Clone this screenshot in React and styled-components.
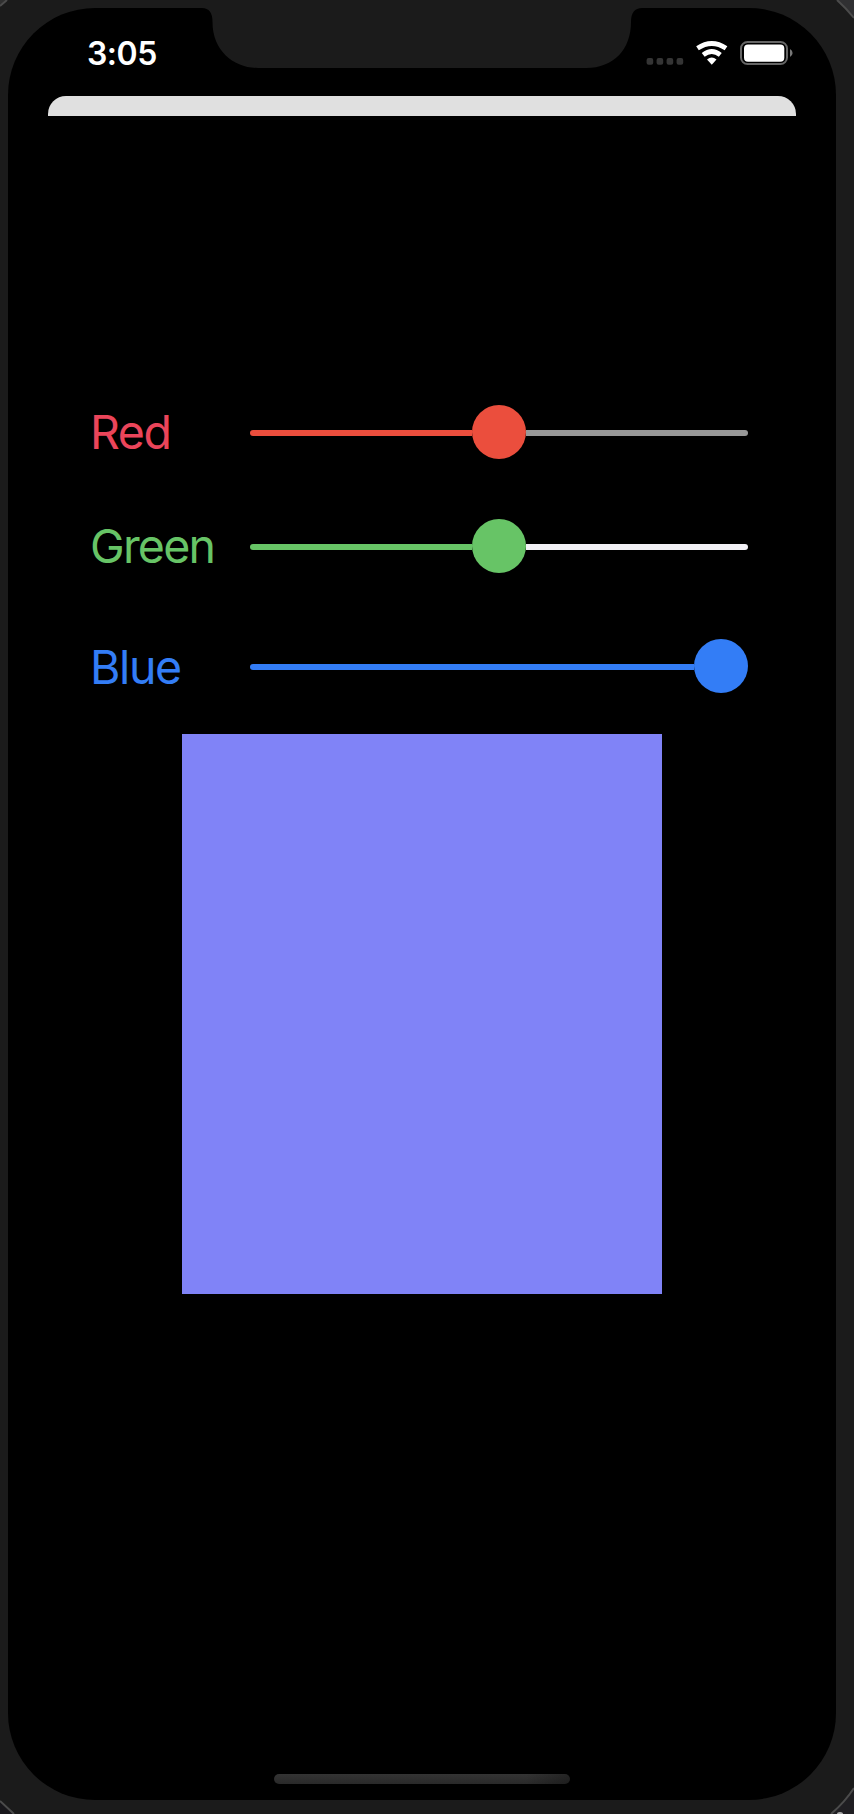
import React from 'react';
import styled, { createGlobalStyle } from 'styled-components';

const GlobalStyle = createGlobalStyle`
  * { box-sizing: border-box; }
  body { margin: 0; background: #1b1b1b; font-family: Inter, "Liberation Sans", sans-serif; }
`;

const Device = styled.div`
  position: relative;
  width: 854px;
  height: 1814px;
  padding: 8px 18px 14px 8px;
  background: #1b1b1b;
  overflow: hidden;
`;

const Corners = styled.svg`
  position: absolute;
  inset: 0;
  pointer-events: none;
`;

const Screen = styled.main`
  position: relative;
  display: flex;
  flex-direction: column;
  align-items: center;
  width: 828px;
  height: 1792px;
  border-radius: 87px;
  background: #000;
  overflow: hidden;
`;

const Notch = styled.svg`
  position: absolute;
  top: 0;
  left: 194px;
`;

const StatusBar = styled.header`
  display: flex;
  justify-content: space-between;
  align-items: flex-start;
  width: 100%;
  height: 88px;
  padding: 25px 42px 0 79px;
`;

const Time = styled.time`
  margin-top: 1px;
  color: #fff;
  font-size: 32px;
  font-weight: 600;
  line-height: 40px;
  letter-spacing: -0.5px;
`;

const StatusIcons = styled.svg`
  display: block;
  margin-top: 5px;
`;

const SheetEdge = styled.div`
  width: 748px;
  height: 20px;
  border-radius: 18px 18px 0 0;
  background: #e0e0e0;
`;

const Controls = styled.section`
  display: flex;
  flex-direction: column;
  width: 664px;
  padding-top: 288px;
`;

const ControlRow = styled.div`
  display: flex;
  height: ${(p) => p.$height}px;
`;

const Label = styled.label`
  width: 160px;
  padding-top: ${(p) => p.$drop || 0}px;
  color: ${(p) => p.$color};
  font-size: 46.5px;
  font-weight: 400;
  line-height: 56px;
  letter-spacing: ${(p) => p.$spacing}px;
`;

const Slider = styled.div`
  display: flex;
  align-items: center;
  width: 498px;
  height: 55px;
`;

const Track = styled.div`
  flex: ${(p) => p.$grow} 1 0;
  height: 6px;
  margin-top: 3px;
  border-radius: ${(p) => (p.$end ? '0 3px 3px 0' : '3px 0 0 3px')};
  background: ${(p) => p.$color};
`;

const Thumb = styled.div`
  flex: none;
  width: 54px;
  height: 54px;
  border-radius: 50%;
  background: ${(p) => p.$color};
`;

const Swatch = styled.div`
  width: 480px;
  height: 560px;
  margin-top: 5px;
  background: #8083f7;
`;

const HomeIndicator = styled.div`
  width: 296px;
  height: 10px;
  margin: auto 0 16px;
  border-radius: 5px;
  background: linear-gradient(90deg, transparent 85%, rgba(0, 0, 0, 0.3)), linear-gradient(#343434, #292929);
`;

const channels = [
  { name: 'Red', text: '#eb455a', color: '#eb4e3d', rest: '#989898', value: 0.5, height: 114, spacing: -1.4 },
  { name: 'Green', text: '#67c466', color: '#67c466', rest: '#f2f1f6', value: 0.5, height: 120, spacing: -1.8 },
  { name: 'Blue', text: '#337df6', color: '#337df6', rest: '#989898', value: 1, height: 91, spacing: -1.4, drop: 1 },
];

export default function App() {
  return (
    <Device>
      <GlobalStyle />
      <Corners width="854" height="1814" viewBox="0 0 854 1814" fill="none">
        <path d="M0 0h7L0 6Z" fill="#303030" />
        <path d="M837 0h17v18Q846 8 837 0Z" fill="#303032" />
        <path d="M0 1801l14 13H0Z" fill="#18171b" />
        <path d="M854 1788q-9 14-23 26h23Z" fill="#1f1e22" />
        <path d="M0 6L7 0M837 0q9 8 17 18M0 1801l14 13M854 1788q-9 14-23 26" stroke="#4b4b4b" strokeWidth="2" />
        <ellipse cx="840" cy="1814" rx="3" ry="2" fill="#aaa" />
      </Corners>
      <Screen>
        <Notch width="440" height="60" viewBox="0 0 440 60">
          <path d="M0 0H440Q429 0 429 14C429 41 412 60 384 60H56C32 60 10.500 43 10.500 14Q10.500 0 0 0Z" fill="#1b1b1b" />
        </Notch>
        <StatusBar>
          <Time>3:05</Time>
          <StatusIcons width="148" height="32" viewBox="0 0 148 32">
            <g fill="#343434">
              <rect x="0.600" y="20" width="6.600" height="6.800" rx="2" />
              <rect x="10.600" y="20" width="6.600" height="6.800" rx="2" />
              <rect x="20.600" y="20" width="6.600" height="6.800" rx="2" />
              <rect x="30.600" y="20" width="6.600" height="6.800" rx="2" />
            </g>
            <g fill="none" stroke="#fff" strokeWidth="4.8">
              <path d="M51.500 10.200Q65.800 0.800 80 10.200" />
              <path d="M57.200 16.800Q65.800 10.200 74.300 16.800" />
            </g>
            <path d="M61 21.500Q65.800 17.500 70.500 21.500L65.800 26.700Z" fill="#fff" />
            <rect x="95" y="4" width="46" height="22" rx="6.500" fill="none" stroke="#666" strokeWidth="2" />
            <rect x="98" y="6.500" width="40.300" height="17.300" rx="4" fill="#fff" />
            <path d="M144 11Q146.600 12.500 146.600 15T144 19Z" fill="#777" />
          </StatusIcons>
        </StatusBar>
        <SheetEdge />
        <Controls>
          {channels.map((c) => (
            <ControlRow key={c.name} $height={c.height}>
              <Label $color={c.text} $spacing={c.spacing} $drop={c.drop}>{c.name}</Label>
              <Slider role="slider" aria-label={c.name} aria-valuenow={c.value}>
                <Track $color={c.color} $grow={c.value} />
                <Thumb $color={c.color} />
                {c.value < 1 && <Track $color={c.rest} $grow={1 - c.value} $end />}
              </Slider>
            </ControlRow>
          ))}
        </Controls>
        <Swatch />
        <HomeIndicator />
      </Screen>
    </Device>
  );
}
